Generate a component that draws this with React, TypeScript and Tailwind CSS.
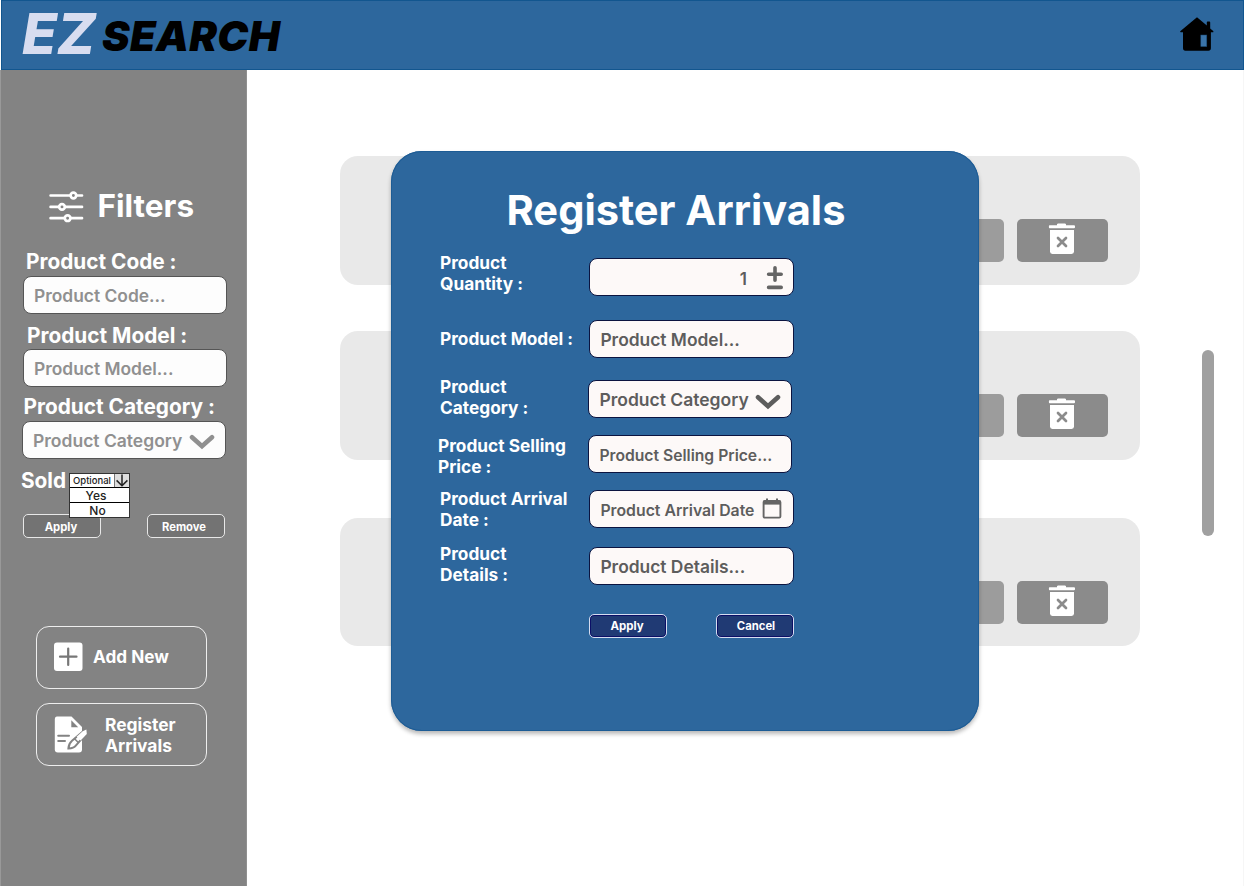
import type { ReactNode } from 'react';

function HomeIcon() {
  return (
    <svg viewBox="0 0 34 34" className="h-[34px] w-[34px]">
      <path
        d="M17 0.3 L26.8 8.6 V5.4 Q26.8 4.6 27.6 4.6 H29.4 Q30.2 4.6 30.2 5.4 V11.6 L33.2 14 Q33.8 15.2 32.6 15.3 H30.9 V31 Q30.9 33.7 28.4 33.7 H5.4 Q3 33.7 3 31 V15.3 H0.8 Q-0.4 15.2 0.5 14 Z"
        fill="#000"
      />
      <rect x="20.8" y="18" width="6" height="11.6" fill="#3b74a8" stroke="#17466f" strokeWidth="0.5" />
    </svg>
  );
}

function SlidersIcon() {
  return (
    <svg viewBox="0 0 35 34" className="h-[34px] w-[35px]" fill="none" stroke="#fff" strokeWidth="2.7" strokeLinecap="round">
      <path d="M1.6 5.5H20.8M28 5.5H33M1.6 16.9H9.4M16.4 16.9H33M1.6 28.2H15M22 28.2H33" />
      <circle cx="24.4" cy="5.5" r="2.8" />
      <circle cx="13" cy="16.9" r="2.8" />
      <circle cx="18.6" cy="28.2" r="2.8" />
    </svg>
  );
}

function ChevronIcon({ className }: { className: string }) {
  return (
    <svg viewBox="0 0 26 16" className={className} fill="none" stroke="currentColor" strokeWidth="4.6" strokeLinecap="round" strokeLinejoin="miter">
      <path d="M3 3.2 L13 12.2 L23 3.2" />
    </svg>
  );
}

function TrashIcon() {
  return (
    <svg viewBox="0 0 28 32" className="mr-px h-8 w-7">
      <path d="M1.6 2.2H9V1.2Q9.3.5 10.2.5H16.8Q17.7.5 18 1.2V2.2H26Q27 2.3 27 3.3V4.3Q27 5.2 26 5.2H1.6Q.9 5.2.9 4.3V3.3Q.9 2.3 1.6 2.2Z" fill="#fff" />
      <path d="M2 7H26V28.6Q26 31 23.6 31H4.4Q2 31 2 28.6Z" fill="#fff" />
      <path d="M10 15L18 23M18 15L10 23" stroke="#8b8b8b" strokeWidth="2.7" strokeLinecap="round" />
    </svg>
  );
}

function NoteEditIcon() {
  return (
    <svg viewBox="0 0 34 37" className="h-[37px] w-[34px]">
      <path d="M3 0.5H17.5L28 11V33.5Q28 36.5 25 36.5H3.8Q.8 36.5.8 33.5V3.5Q.8.5 3 .5Z" fill="#fff" />
      <path d="M17.3 4.2L24.2 11.3H17.3Z" fill="#838383" />
      <path d="M4.2 19.8H15M4.2 25H11" stroke="#838383" strokeWidth="2" strokeLinecap="round" />
      <path d="M30.4 14.2L33 14V16.8L22 29.4Q19.6 32.5 14.4 32.4Q14.8 27.5 18 24.8Z" fill="#fff" stroke="#838383" strokeWidth="2" />
      <path d="M20.5 22.8L24.6 26.8" stroke="#838383" strokeWidth="1.6" />
      <path d="M28.7 15.2L32.4 13.6L32.8 18L26.6 24.6L22.6 20.8Z" fill="#fff" />
    </svg>
  );
}

function CalendarIcon() {
  return (
    <svg viewBox="0 0 20 22" className="h-[22px] w-5">
      <path d="M5 0.6V4M15 0.6V4" stroke="#656565" strokeWidth="2" />
      <rect x="1.6" y="3" width="16.8" height="16.6" rx="1.2" fill="none" stroke="#656565" strokeWidth="1.9" />
      <path d="M1.6 2.6H18.4V6.6H1.6Z" fill="#656565" />
    </svg>
  );
}

function StepperIcon() {
  return (
    <svg viewBox="0 0 18 26" className="h-[26px] w-[18px]" stroke="#656565" strokeWidth="3.6" strokeLinecap="round">
      <path d="M2.6 10.2H15.2M9 3.8V16.2M2.6 23.4H15.2" />
    </svg>
  );
}

function ProductCard({ className }: { className: string }) {
  return (
    <div className={`flex h-[128.5px] w-[800.5px] justify-end rounded-[18px] bg-[#e9e9e9] pt-[63px] pr-8 ${className}`}>
      <div className="h-[43px] w-[91px] rounded-[5px] bg-[#9c9c9c]" />
      <button className="ml-[13px] flex h-[43px] w-[91px] justify-center rounded-[5px] bg-[#8b8b8b] pt-1">
        <TrashIcon />
      </button>
    </div>
  );
}

function SideLabel({ className, children }: { className: string; children: ReactNode }) {
  return <div className={`h-6 text-[20.8px] leading-[26px] font-bold text-white ${className}`}>{children}</div>;
}

function SideField({ className, children }: { className: string; children: ReactNode }) {
  return (
    <div className={`flex h-[38px] w-[204px] items-center rounded-[8px] border border-[#555] bg-[#fdfdfd] pl-2.5 text-[17.4px] font-semibold text-[#909090] ${className}`}>
      {children}
    </div>
  );
}

function FormRow({ row, label, text, field, children }: { row: string; label: string; text: ReactNode; field: string; children: ReactNode }) {
  return (
    <div className={`flex items-start ${row}`}>
      <div className={`w-[149px] shrink-0 text-[17.3px] leading-[21px] font-bold text-white ${label}`}>{text}</div>
      <div className={`flex h-[38px] shrink-0 items-center rounded-[8px] border border-[#0b1440] bg-[#fdf9f8] pl-[10.4px] font-semibold text-[#5d5d5d] ${field}`}>
        {children}
      </div>
    </div>
  );
}

function RegisterDialog() {
  return (
    <section className="absolute top-[151px] left-[391px] h-[580px] w-[588px] rounded-[31px] bg-[#2d679d] pl-[49px] shadow-[0_3px_4px_rgba(0,0,0,0.28),inset_0_0_0_1px_#1d5c95]">
      <h2 className="mt-[34px] -ml-[49px] h-[51px] pr-[18px] text-center text-[41.6px] leading-[51px] font-bold text-white">Register Arrivals</h2>
      <div className="mt-4 flex flex-col">
        <FormRow row="h-[66px]" label="" text={<>Product<br />Quantity :</>} field="mt-[6px] w-[205px] text-[17px]">
          <span className="ml-auto pt-[5px]">1</span>
          <span className="mr-[9px] ml-[19px]"><StepperIcon /></span>
        </FormRow>
        <FormRow row="h-[58px]" label="mt-[10px]" text="Product Model :" field="mt-[2px] w-[205px] pt-[3px] text-[17.4px]">
          Product Model...
        </FormRow>
        <FormRow row="h-[56px]" label="" text={<>Product<br />Category :</>} field="mt-[4px] -ml-px w-[204px] text-[17.5px]">
          <span className="pt-[3px]">Product Category</span>
          <ChevronIcon className="mt-[5px] ml-[6px] h-4 w-[26px]" />
        </FormRow>
        <FormRow row="h-[57px]" label="mt-[3px] mr-[2px] -ml-[2px]" text={<>Product Selling<br />Price :</>} field="mt-[3px] -ml-px w-[204px] pt-[3px] text-[15.7px]">
          Product Selling Price...
        </FormRow>
        <FormRow row="h-[54px]" label="-mt-px" text={<>Product Arrival<br />Date :</>} field="mt-px w-[205px] text-[15.8px]">
          <span className="pt-[3px]">Product Arrival Date</span>
          <span className="ml-2"><CalendarIcon /></span>
        </FormRow>
        <FormRow row="h-[71px]" label="" text={<>Product<br />Details :</>} field="mt-[4px] w-[205px] pt-[3px] text-[17.4px]">
          Product Details...
        </FormRow>
      </div>
      <div className="ml-[149px] flex gap-[49px]">
        <button className="h-6 w-[78px] rounded-[5px] border border-[#d5dcf0] bg-[#203a74] pt-[2px] pr-[2px] text-[11.5px] leading-none font-bold text-white shadow-[inset_0_0_0_1px_#0b0f66]">Apply</button>
        <button className="h-6 w-[78px] rounded-[5px] border border-[#d5dcf0] bg-[#203a74] pt-[2px] pl-[2px] text-[11.3px] leading-none font-bold text-white shadow-[inset_0_0_0_1px_#0b0f66]">Cancel</button>
      </div>
    </section>
  );
}

function Sidebar() {
  return (
    <aside className="flex w-[247px] shrink-0 flex-col border-x border-l-[#999] border-r-[#909090] bg-[#838383] pl-5">
      <div className="mt-[115px] ml-7 flex h-10 items-center">
        <span className="mt-1"><SlidersIcon /></span>
        <h1 className="mt-[2px] ml-[13.6px] text-[31.5px] leading-10 font-bold text-white">Filters</h1>
      </div>
      <SideLabel className="mt-6 ml-[5px]">Product Code :</SideLabel>
      <SideField className="mt-[3px] ml-[2px] pt-[3px]">Product Code...</SideField>
      <SideLabel className="mt-[9px] ml-[6px]">Product Model :</SideLabel>
      <SideField className="mt-[2px] ml-[2px] pt-[3px]">Product Model...</SideField>
      <SideLabel className="mt-[7px] ml-[2.5px]">Product Category :</SideLabel>
      <SideField className="mt-[3px] ml-px">
        <span className="pt-[3px] text-[17.5px]">Product Category</span>
        <ChevronIcon className="mt-[4px] ml-[7px] h-4 w-[26px]" />
      </SideField>
      <div className="relative mt-[9px] h-6">
        <SideLabel className="">Sold</SideLabel>
        <div className="absolute top-[5px] left-[48px] z-10 w-[61px] border border-[#333] bg-white text-center text-[12px] font-medium text-[#222]">
          <div className="flex h-[13px] items-center text-[9.5px] leading-none">
            <span className="w-[45px] pt-px">Optional</span>
            <span className="flex h-[13px] flex-1 items-center justify-center border-l border-[#777] bg-[#ddd]">
              <svg viewBox="0 0 14 13" className="h-[13px] w-[14px]" fill="none" stroke="#222" strokeWidth="1.5">
                <path d="M7 0.5V11.5M1.6 6.4L7 11.8L12.4 6.4" />
              </svg>
            </span>
          </div>
          <div className="h-[15px] border-t border-black pr-[7px] leading-[15px]">Yes</div>
          <div className="h-[15px] border-t border-black pr-1 leading-[15px]">No</div>
        </div>
      </div>
      <div className="mt-[22px] ml-[2px] flex gap-[46px]">
        <button className="h-6 w-[78px] rounded-[5px] border border-[#e8e8e8] bg-[#737373] pt-[3px] pr-[2px] text-[11.3px] leading-none font-bold text-white">Apply</button>
        <button className="h-6 w-[78px] rounded-[5px] border border-[#e8e8e8] bg-[#737373] pt-[3px] pr-[4px] text-[11.2px] leading-none font-bold text-white">Remove</button>
      </div>
      <button className="mt-[88px] ml-[15px] flex h-[63px] w-[171px] items-center rounded-[13px] border border-[#eee] pl-[17px] text-[17.2px] font-bold text-white">
        <svg viewBox="0 0 29 29" className="mb-[2px] h-[29px] w-[29px]">
          <rect x="0" y="0.5" width="28.5" height="28.5" rx="3" fill="#fff" />
          <path d="M14.2 6.5V23M6 14.7H22.5" stroke="#777" strokeWidth="2.2" strokeLinecap="round" />
        </svg>
        <span className="mb-[2px] ml-[10px]">Add New</span>
      </button>
      <button className="mt-[14px] ml-[15px] flex h-[63px] w-[171px] items-center rounded-[13px] border border-[#eee] pl-[17px] text-left text-[17.4px] leading-[21px] font-bold text-white">
        <NoteEditIcon />
        <span className="ml-[17px]">Register<br />Arrivals</span>
      </button>
    </aside>
  );
}

export default function App() {
  return (
    <div className="relative flex h-[886px] w-[1246px] flex-col overflow-hidden bg-white font-['Inter',sans-serif] whitespace-nowrap">
      <header className="ml-px flex h-[70px] w-[1243px] shrink-0 justify-between border border-[#12568f] bg-[#2d679d] pr-[29px] pl-[20px]">
        <div className="flex font-extrabold italic">
          <span className="mt-[6px] h-[54px] w-[74px] text-[56.6px] leading-[54px] text-[#d8ddf0]">EZ</span>
          <span className="mt-[11px] ml-[6px] h-12 text-[41.5px] leading-12 font-black tracking-[0.3px] text-black">SEARCH</span>
        </div>
        <span className="mt-4"><HomeIcon /></span>
      </header>
      <div className="flex min-h-0 flex-1">
        <Sidebar />
        <main className="flex w-[997px] shrink-0 items-start border-r border-[#f6f6f6] pl-[92.5px]">
          <div className="flex flex-col">
            <ProductCard className="mt-[86px]" />
            <ProductCard className="mt-[46.5px]" />
            <ProductCard className="mt-[58px]" />
          </div>
          <div className="mt-[280px] ml-[62px] h-[186px] w-[12px] rounded-full bg-[#a0a0a0]" />
        </main>
      </div>
      <RegisterDialog />
    </div>
  );
}
